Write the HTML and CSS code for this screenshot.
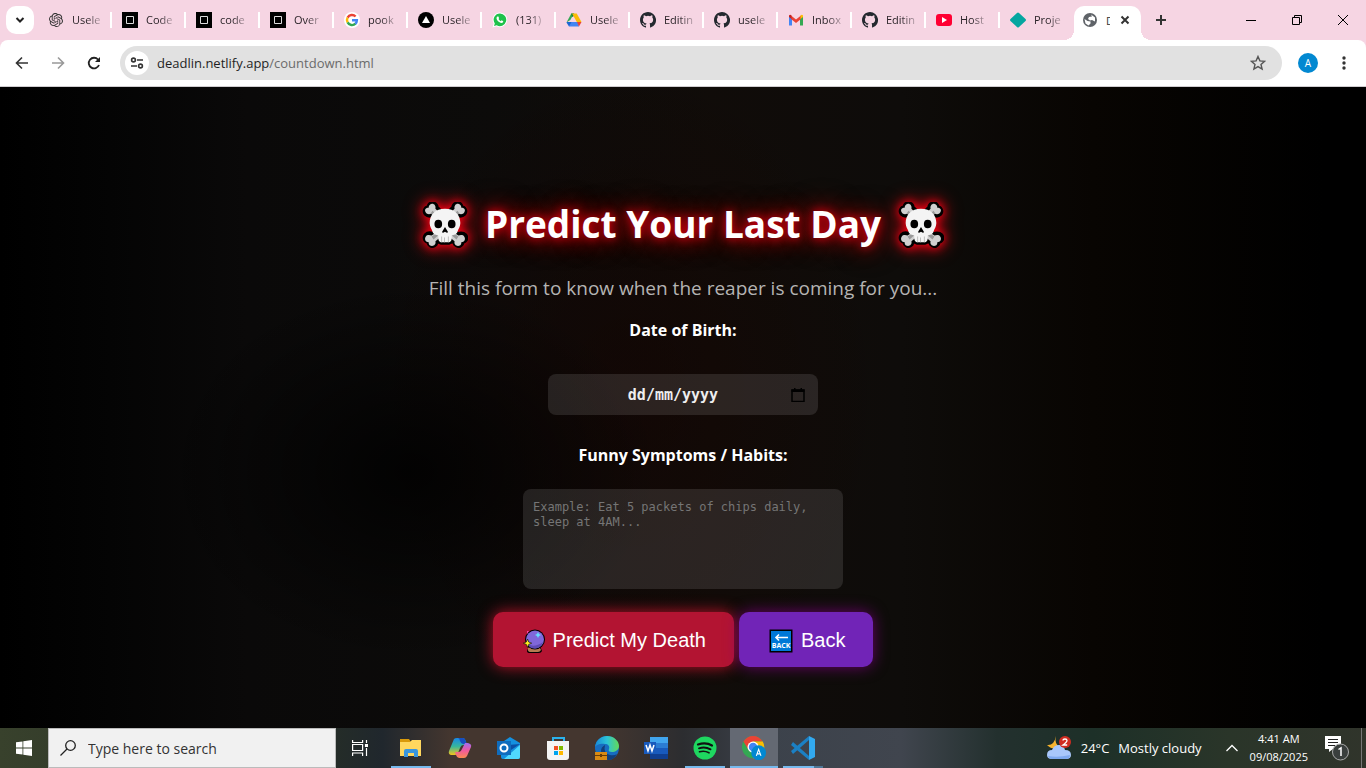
FILE: index.html
```html
<!DOCTYPE html>
<html lang="en">
<head>
<meta charset="utf-8">
<meta name="viewport" content="width=device-width, initial-scale=1">
<title>Predict Your Last Day</title>
<link rel="stylesheet" href="styles.css">
</head>
<body>
<svg class="defs" aria-hidden="true">
  <symbol id="skull" viewBox="0 0 48 48">
    <g stroke="#000" stroke-width="5" stroke-linejoin="round" fill="#000">
      <path d="M8 3c3-3 7 0 7 3l6 6 6 0 6-6c0-3 4-6 7-3 1 1 1 2 1 3 3 0 5 3 3 6-2 2-5 2-7 1l-4 4 0 14 4 3c3-1 6-1 8 1 2 3 0 6-3 6 0 4-4 6-7 3l-2-4-5 2H20l-5-2-1 4c-3 3-7 1-7-3-3 0-5-3-3-6 2-2 5-2 7-1l4-3V17l-4-4c-2 1-5 1-7-1-2-3 0-6 3-6 0-1 0-2 1-3z"/>
    </g>
    <g fill="#d0d0d0">
      <path d="M8 3c3-3 7 0 6 4l6 6-4 5-6-6c-2 1-5 1-6-1-2-3 0-5 3-5 0-1 0-2 1-3z"/>
      <path d="M40 3c-3-3-7 0-6 4l-6 6 4 5 6-6c2 1 5 1 6-1 2-3 0-5-3-5 0-1 0-2-1-3z"/>
      <path d="M8 45c3 2 7 0 6-4l6-5-4-5-6 4c-2-1-5-1-6 1-2 3 0 6 3 6 0 1 0 2 1 3z"/>
      <path d="M40 45c-3 2-7 0-6-4l-6-5 4-5 6 4c2-1 5-1 6 1 2 3 0 6-3 6 0 1 0 2-1 3z"/>
    </g>
    <path fill="#999" d="M11 9l7 7-2 2-7-6zM37 9l-7 7 2 2 7-6zM10 36l6-4 2 2-6 5zM38 36l-6-4-2 2 6 5z"/>
    <path fill="#f4f4f4" d="M24 7c10 0 16 6 16 15 0 4-2 6-3 9-1 3-4 3-6 4v3c0 3-2 4-4 4h-6c-2 0-4-1-4-4v-3c-2-1-5-1-6-4-1-3-3-5-3-9C8 13 14 7 24 7z"/>
    <path fill="#bcbcbc" d="M20 36h1v6h-1zM23 37h1v5h-1zM27 36h1v6h-1z"/>
    <ellipse cx="17" cy="23" rx="4" ry="4.500"/><ellipse cx="31" cy="23" rx="4" ry="4.500"/>
    <path d="M24 26l3 5q0 2-3 0-3 2-3 0z"/>
  </symbol>
  <symbol id="square" viewBox="0 0 16 16"><path d="M0 0h16v16H0z"/><path fill="none" stroke="#ddd" d="M4.500 4.500h7v7h-7z"/></symbol>
  <symbol id="github" viewBox="0 0 16 16"><path fill="#24292f" d="M8 0C3.580 0 0 3.580 0 8c0 3.540 2.290 6.530 5.470 7.590.4.070.55-.17.55-.38v-1.490c-2.010.37-2.530-.49-2.690-.94-.09-.23-.48-.94-.82-1.130-.28-.15-.68-.52-.01-.53.63-.01 1.080.58 1.230.82.72 1.210 1.870.87 2.330.66.07-.52.28-.87.51-1.070-1.780-.2-3.640-.89-3.640-3.950 0-.87.31-1.590.82-2.150-.08-.2-.36-1.020.08-2.120 0 0 .67-.21 2.200.82a7.420 7.420 0 0 1 4 0c1.530-1.040 2.200-.82 2.200-.82.44 1.100.16 1.920.08 2.120.51.56.82 1.270.82 2.150 0 3.070-1.870 3.750-3.650 3.950.29.25.54.73.54 1.480v2.200c0 .21.15.46.55.38A8 8 0 0 0 8 0z"/></symbol>
</svg>

<header class="browser">
  <div class="tabstrip">
    <button class="tab-search" aria-label="Search tabs"><svg width="10" height="10" viewBox="0 0 10 10"><path d="M1.500 3l3.500 3.500L8.500 3" fill="none" stroke="#222" stroke-width="2"/></svg></button>
    <nav class="tabs" aria-label="Tabs">
      <a class="tab" href="#"><svg class="fav fav-knot" viewBox="0 0 24 24"><path fill="#333" d="M22.282 9.821a5.985 5.985 0 0 0-.516-4.910 6.046 6.046 0 0 0-6.510-2.900A6.065 6.065 0 0 0 4.981 4.180a5.985 5.985 0 0 0-3.998 2.900 6.046 6.046 0 0 0 .743 7.097 5.980 5.980 0 0 0 .510 4.911 6.051 6.051 0 0 0 6.515 2.900A5.985 5.985 0 0 0 13.260 24a6.056 6.056 0 0 0 5.772-4.206 5.990 5.990 0 0 0 3.998-2.900 6.056 6.056 0 0 0-.748-7.073zM13.260 22.430a4.476 4.476 0 0 1-2.876-1.040l4.920-2.840a.795.795 0 0 0 .393-.681v-6.737l2.020 1.168v5.620a4.504 4.504 0 0 1-4.457 4.510zM3.600 18.304a4.470 4.470 0 0 1-.535-3.014l4.924 2.843a.771.771 0 0 0 .781 0l5.843-3.369v2.333l-4.872 2.850A4.500 4.500 0 0 1 3.600 18.304zM2.340 7.896a4.485 4.485 0 0 1 2.366-1.973V11.600a.766.766 0 0 0 .388.677l5.815 3.354-2.020 1.169-4.830-2.787A4.504 4.504 0 0 1 2.340 7.896zm16.597 3.856l-5.833-3.388L15.119 7.200l4.830 2.791a4.494 4.494 0 0 1-.676 8.105v-5.678a.790.790 0 0 0-.407-.667zm2.010-3.023l-4.914-2.880a.776.776 0 0 0-.785 0L9.409 9.230V6.897l4.830-2.787a4.500 4.500 0 0 1 6.680 4.660zM8.307 12.863l-2.020-1.164V6.075a4.500 4.500 0 0 1 7.375-3.454L8.704 5.460a.795.795 0 0 0-.393.681zm1.097-2.365l2.602-1.500 2.607 1.500v2.999l-2.597 1.500-2.607-1.500z"/></svg><span>Usele</span></a>
      <a class="tab" href="#"><svg class="fav"><use href="#square"/></svg><span>Code</span></a>
      <a class="tab" href="#"><svg class="fav"><use href="#square"/></svg><span>code</span></a>
      <a class="tab" href="#"><svg class="fav"><use href="#square"/></svg><span>Over</span></a>
      <a class="tab" href="#"><svg class="fav" viewBox="0 0 16 16"><circle cx="8" cy="8" r="8" fill="#fff"/><g fill="none" stroke-width="2.400"><path stroke="#ea4335" d="M3.600 5.600A5 5 0 0 1 11.600 4.500"/><path stroke="#fbbc05" d="M3.600 10.400a5 5 0 0 1 0-4.800"/><path stroke="#34a853" d="M11.500 11.700a5 5 0 0 1-7.900-1.300"/><path stroke="#4285f4" d="M8 8.200h4.900c0 1.500-.5 2.600-1.600 3.600"/></g></svg><span>pook</span></a>
      <a class="tab" href="#"><svg class="fav" viewBox="0 0 16 16"><circle cx="8" cy="8" r="8"/><path fill="#fff" d="M8 4l4 7H4z"/></svg><span>Usele</span></a>
      <a class="tab" href="#"><svg class="fav" viewBox="0 0 16 16"><path fill="#fff" d="M8 .5a7.300 7.300 0 1 1-3.400 13.800L.5 15.500l1.200-4A7.300 7.300 0 0 1 8 .5z"/><path fill="#1fc14b" d="M8 1.500A6.300 6.300 0 1 1 4.700 13.200L2 14l.8-2.600A6.300 6.300 0 0 1 8 1.500z"/><path fill="#fff" d="M5.400 4.500h1l.7 1.700-.6.900q.8 1.500 2.300 2.100l.8-.9 1.700.9q.1 1.600-1.900 1.700C7 10.600 4.600 8.200 4.500 6q.1-1 .9-1.500z"/></svg><span>(131)</span></a>
      <a class="tab" href="#"><svg class="fav" viewBox="0 0 16 16"><path fill="#34a853" d="M5.300 1.500H8L4.300 8 .5 10.500z"/><path fill="#188038" d="M5.300 1.500H8l1 2-3 1.500z"/><path fill="#fbbc04" d="M6 1.500h4.700l4.800 8.500h-4.700z"/><path fill="#4285f4" d="M3.300 10h9L13 14.500H3z"/><path fill="#1967d2" d="M.5 10.500L3 14.500 5.500 10H1z"/><path fill="#ea4335" d="M11 10h4.500L13 14.500z"/></svg><span>Usele</span></a>
      <a class="tab" href="#"><svg class="fav"><use href="#github"/></svg><span>Editin</span></a>
      <a class="tab" href="#"><svg class="fav"><use href="#github"/></svg><span>usele</span></a>
      <a class="tab" href="#"><svg class="fav" viewBox="0 0 16 16"><path fill="#4285f4" d="M1 4l3 2v7.500H1z"/><path fill="#34a853" d="M12 6l3-2v9.500h-3z"/><path fill="#ea4335" d="M3 3.500L8 7.500l5-4V7l-5 4-5-4z"/><path fill="#c5221f" d="M1 3.500Q2 2 3.500 3.500V7L1 5z"/><path fill="#fbbc04" d="M15 3.500Q14 2 12.500 3.500V7L15 5z"/></svg><span>Inbox</span></a>
      <a class="tab" href="#"><svg class="fav"><use href="#github"/></svg><span>Editin</span></a>
      <a class="tab" href="#"><svg class="fav" viewBox="0 0 16 16"><rect y="2" width="16" height="12" rx="3" fill="#ff0033"/><path fill="#fff" d="M6 5l5 3-5 3z"/></svg><span>Host</span></a>
      <a class="tab" href="#"><svg class="fav" viewBox="0 0 16 16"><path fill="#05a6a0" d="M7 1q1-1 2 0l6.500 6q1 1 0 2L9 15q-1 1-2 0L.5 9q-1-1 0-2z"/></svg><span>Proje</span></a>
    </nav>
    <div class="active-tab">
      <svg width="16" height="16" viewBox="0 0 16 16"><circle cx="8" cy="8" r="7" fill="#5f6368"/><path fill="#fff" d="M9 2.500l4 3v4l-3-1.500-2 .5L6 7l1-2 3-.5zM2.500 7l3 2 3 .5v2l-2 2-3-2z"/></svg>
      <span class="active-title">D</span>
      <button class="tab-close" aria-label="Close tab"><svg width="10" height="10" viewBox="0 0 10 10"><path d="M1.500 1.500l7 7m0-7l-7 7" stroke="#333" stroke-width="2"/></svg></button>
    </div>
    <button class="new-tab" aria-label="New tab"><svg width="12" height="12" viewBox="0 0 12 12"><path d="M6 1v10M1 6h10" stroke="#333" stroke-width="2"/></svg></button>
    <div class="window-controls">
      <button aria-label="Minimize"><svg width="10" height="10"><path d="M0 5.500h10" stroke="#000"/></svg></button>
      <button aria-label="Restore"><svg width="10" height="10" fill="none" stroke="#000"><path d="M.5 2.500h7v7h-7zM2.500 2.500v-2h7v7h-2"/></svg></button>
      <button aria-label="Close"><svg width="10" height="10"><path d="M0 0l10 10M10 0L0 10" stroke="#000"/></svg></button>
    </div>
  </div>
  <div class="toolbar">
    <button class="tool" aria-label="Back"><svg width="14" height="14" viewBox="0 0 14 14"><path d="M13 7H2M7 1.500L1.500 7 7 12.500" fill="none" stroke="#333" stroke-width="1.600"/></svg></button>
    <button class="tool" aria-label="Forward"><svg width="14" height="14" viewBox="0 0 14 14"><path d="M1 7h11M7 1.500L12.500 7 7 12.500" fill="none" stroke="#999" stroke-width="1.600"/></svg></button>
    <button class="tool" aria-label="Reload"><svg width="14" height="14" viewBox="0 0 14 14"><path d="M12 9A5.300 5.300 0 1 1 11 3.500L12.300 5" fill="none" stroke="#222" stroke-width="1.800"/><path d="M13 1v5H8z" fill="#222"/></svg></button>
    <div class="address">
      <button class="site-info" aria-label="Site information"><svg width="14" height="12" viewBox="0 0 14 12" fill="none" stroke="#333" stroke-width="1.600"><circle cx="3.500" cy="3" r="1.900"/><path d="M7 3h6M1 9h6"/><circle cx="10.500" cy="9" r="1.900"/></svg></button>
      <a class="url" href="#">deadlin.netlify.app<span>/countdown.html</span></a>
      <button class="star" aria-label="Bookmark"><svg width="16" height="16" viewBox="0 0 16 16"><path d="M8 1.500l1.900 4.400 4.700.4-3.600 3.100 1.100 4.700L8 11.600l-4.100 2.500L5 9.400 1.400 6.300l4.700-.4z" fill="none" stroke="#555" stroke-width="1.400"/></svg></button>
    </div>
    <button class="avatar" aria-label="Profile">A</button>
    <button class="menu" aria-label="Menu"><svg width="4" height="14"><g fill="#333"><circle cx="2" cy="2" r="1.700"/><circle cx="2" cy="7" r="1.700"/><circle cx="2" cy="12" r="1.700"/></g></svg></button>
  </div>
</header>

<main class="page">
  <h1 class="title"><svg class="skull"><use href="#skull"/></svg><span>Predict Your Last Day</span><svg class="skull"><use href="#skull"/></svg></h1>
  <p class="subtitle">Fill this form to know when the reaper is coming for you...</p>
  <form class="form">
    <label class="label" for="dob">Date of Birth:</label>
    <div class="date-box">
      <input id="dob" type="text" placeholder="dd/mm/yyyy">
      <button type="button" class="calendar" aria-label="Show date picker"><svg width="14" height="14" viewBox="0 0 14 14"><path d="M1 2h12v11.500H1z" fill="none" stroke="#000" stroke-width="1.500"/><path d="M.5 1.500h13V4H.5zM3 0h1.500v2H3zM9.500 0H11v2H9.500z"/></svg></button>
    </div>
    <label class="label" for="habits">Funny Symptoms / Habits:</label>
    <textarea id="habits" placeholder="Example: Eat 5 packets of chips daily, sleep at 4AM..."></textarea>
    <div class="actions">
      <button type="button" class="btn btn-predict">
        <svg width="22" height="24" viewBox="0 0 22 24"><path d="M6 17h11l2 5q-1 2-3 2H7q-3 0-3-2z"/><path fill="#b57b51" d="M5 19q6-3 12 0l1 2q-1 2-3 2H8q-3 0-3-2z"/><circle cx="12" cy="10.500" r="10"/><circle cx="12" cy="10.500" r="9" fill="#8067da"/><path fill="#5f4bb5" d="M4 14q6 6 16-1-2 6-8 6.500-6 0-8-5.500z"/><path fill="#f4a" d="M4 2l2 0-2 3z"/><path fill="#6df" d="M15 3l1 2 2 1-2 1-1 2-1-2-2-1 2-1z"/><path fill="#fe2" stroke="#000" stroke-width=".6" d="M4.500 10l1.200 3 3 1.200-3 1.200-1.200 3-1.200-3-3-1.200 3-1.200z"/></svg>
        <span>Predict My Death</span>
      </button>
      <button type="button" class="btn btn-back">
        <svg width="24" height="24" viewBox="0 0 24 24"><path d="M.5.500h23v23H.5z"/><path fill="#0078d7" d="M2 2h20v20H2z"/><path d="M19 8.500H7M10 5.500l-3 3 3 3" fill="none" stroke="#fff" stroke-width="1.600"/><text class="back-glyph" x="12" y="19" text-anchor="middle" fill="#fff">BACK</text></svg>
        <span>Back</span>
      </button>
    </div>
  </form>
</main>

<footer class="taskbar">
  <button class="start" aria-label="Start"><svg width="16" height="16" viewBox="0 0 16 16"><path fill="#fff" d="M0 2.300L6.500 1.400v6.200H0zM7.300 1.300L16 0v7.600H7.300zM0 8.400h6.500v6.200L0 13.700zM7.300 8.400H16V16l-8.700-1.300z"/></svg></button>
  <label class="search"><svg width="16" height="16" viewBox="0 0 16 16" fill="none" stroke="#222" stroke-width="1.300"><circle cx="10.500" cy="5.500" r="4.800"/><path d="M7 9L.5 15.500"/></svg><input type="text" placeholder="Type here to search" aria-label="Type here to search"></label>
  <button class="app" aria-label="Task view"><svg width="16" height="16" fill="none" stroke="#fff" stroke-width="1.200"><path d="M.6 0v2.500h10V0M.6 4.500h10v6H.6zM.6 16v-3h10v3M14.500 0v3M14.500 8v8"/><path fill="#fff" d="M13.500 4.500h2v2h-2z"/></svg></button>
  <div class="apps">
    <button class="app open" aria-label="File Explorer"><svg width="24" height="24" viewBox="0 0 24 24"><path fill="#d99a0b" d="M1 3h9l2 3v3H1z"/><path fill="#ffd75e" d="M1 6h10l2-2h9v16H1z"/><path fill="#3a96dd" d="M5 21v-6q0-2 2-2h10q2 0 2 2v6h-4v-4H9v4z"/></svg></button>
    <button class="app" aria-label="Copilot"><svg width="24" height="24" viewBox="0 0 24 24"><defs><linearGradient id="ca" x2="0" y2="1"><stop stop-color="#1788e8"/><stop offset=".5" stop-color="#38b79b"/><stop offset="1" stop-color="#f5c51b"/></linearGradient><linearGradient id="cb" x2="0" y2="1"><stop stop-color="#a06cf0"/><stop offset=".5" stop-color="#f05a9d"/><stop offset="1" stop-color="#fa8a50"/></linearGradient></defs><path fill="url(#ca)" d="M6 3q1-1 3-1h6q2 0 3 4l1 3h-4q-2 0-3 3l-2 5q-1 2-3 2H3q-3-1-2-4z"/><path fill="#174fc0" d="M10 2h5q2 0 3 4l1 2h-4q-2 0-3-3-.5-3-2-3z"/><path fill="url(#cb)" d="M17 7h3q4 1 3 4l-4 9q-1 2-3 2h-5q-2 0-3-3l-1-3h4q2 0 3-3z"/></svg></button>
    <button class="app" aria-label="Outlook"><svg width="24" height="24" viewBox="0 0 24 24"><path fill="#1490df" d="M4 7l9-6 10 6v14q0 2-2 2H6q-2 0-2-2z"/><path fill="#0a4fa5" d="M10 9l13-1-12 8z"/><path fill="#50d9ff" d="M23 9v12q0 2-2 2H7z"/><path fill="#0f6cbd" d="M0 5h14v14H0z"/><circle cx="7" cy="12" r="3.500" fill="none" stroke="#fff" stroke-width="2"/></svg></button>
    <button class="app" aria-label="Store"><svg width="24" height="24" viewBox="0 0 24 24"><path fill="none" stroke="#2ab2ed" stroke-width="2" d="M7 6V2h11v4"/><path fill="#f4f4f4" d="M1 5h22v16q0 3-3 3H4q-3 0-3-3z"/><path fill="#f25022" d="M8 10h4v4H8z"/><path fill="#7fba00" d="M13 10h4v4h-4z"/><path fill="#00a4ef" d="M8 15h4v4H8z"/><path fill="#ffb900" d="M13 15h4v4h-4z"/></svg></button>
    <button class="app" aria-label="Edge"><svg width="24" height="24" viewBox="0 0 24 24"><defs><linearGradient id="ea"><stop stop-color="#1788d8"/><stop offset=".5" stop-color="#2cc3d6"/><stop offset="1" stop-color="#63d957"/></linearGradient></defs><circle cx="12" cy="12" r="12" fill="#176dc0"/><path fill="url(#ea)" d="M0 11C1 4 6 0 12 0c7 0 12 5 12 10 0 4-4 6-7 6-3 0-4-1-3-3 1-3-1-5-4-5C6 7 1 9 0 11z"/><path fill="#123f7b" d="M10 9q-2 8 5 10 4 1 7-1-3 6-9 6-7-3-7-9 0-4 4-6z"/><path fill="#d98a13" d="M0 16h12v8H0z"/><path fill="#6b3d04" d="M0 19h12v1H0zM5 18h2v3H5z"/></svg></button>
    <button class="app" aria-label="Word"><svg width="24" height="24" viewBox="0 0 24 24"><path fill="#2b7cd3" d="M6 1h18v22H6z"/><path fill="#41a5ee" d="M6 1h18v6H6z"/><path fill="#185abd" d="M6 12h18v6H6z"/><path fill="#103f91" d="M6 18h18v5H6z"/><path fill="#185abd" d="M0 6h12v12H0z"/><path fill="none" stroke="#fff" stroke-width="1.500" d="M2 9l2 6 2-6 2 6 2-6"/></svg></button>
    <button class="app open" aria-label="Spotify"><svg width="24" height="24" viewBox="0 0 24 24"><circle cx="12" cy="12" r="11.500" fill="#1ed760"/><g fill="none" stroke="#111" stroke-linecap="round"><path stroke-width="2.200" d="M5 8.500q8-2.500 14 1"/><path stroke-width="1.900" d="M6 12.300q6-2 11.500 1"/><path stroke-width="1.600" d="M6.500 15.800q5-1.500 9.500 1"/></g></svg></button>
    <button class="app open current" aria-label="Chrome"><svg width="26" height="26" viewBox="0 0 28 28"><circle cx="13" cy="13" r="12" fill="#34a853"/><path fill="#ea4335" d="M2.600 7A12 12 0 0 1 23.400 7H13l-5 9z"/><path fill="#fbbc04" d="M13 7h10.400A12 12 0 0 1 13 25l5-9z"/><circle cx="13" cy="13" r="6" fill="#fff"/><circle cx="13" cy="13" r="4.600" fill="#4285f4"/><circle cx="19" cy="19" r="8" fill="#0288d1"/><path fill="none" stroke="#fff" stroke-width="1.200" d="M16.500 22.500l2.500-7 2.500 7M17.300 20.300h3.400"/></svg></button>
    <button class="app open multi" aria-label="Visual Studio Code"><svg width="24" height="24" viewBox="0 0 24 24"><path fill="#1b80c4" d="M2 6l16 14v4L0 9z"/><path fill="#1b80c4" d="M2 18L18 4V0L0 15z"/><path fill="#32a9ef" d="M18 0l6 3v18l-6 3z"/></svg></button>
  </div>
  <div class="tray">
    <div class="weather">
      <svg width="26" height="24" viewBox="0 0 26 24"><path fill="#f7b32b" d="M10 0q-2 8 4 11-7 4-13-2 7 1 9-9z"/><path fill="#a9c7fa" d="M6 23q-5 0-5-4 0-5 5-5 2-5 7-5 5 0 6 5 6 0 6 5 0 4-5 4z"/><path fill="#7fa9ee" d="M2 20q10 2 22-1 0 4-4 4H6q-3 0-4-3z"/><circle cx="19" cy="6" r="6" fill="#d02c22"/><path fill="none" stroke="#fff" stroke-width="1.300" d="M17 4.500q0-1.500 2-1.500t2 1.500Q21 6 17 9h4.200"/></svg>
      <span>24°C</span><span>Mostly cloudy</span>
    </div>
    <button class="chevron" aria-label="Show hidden icons"><svg width="12" height="8"><path d="M.5 7L6 1.500 11.500 7" fill="none" stroke="#fff" stroke-width="1.300"/></svg></button>
    <div class="clock"><span>4:41 AM</span><span>09/08/2025</span></div>
    <button class="notices" aria-label="Notifications"><svg width="26" height="26" viewBox="0 0 26 26"><path fill="#fff" d="M1 1h16v13H9l-4 3v-3H1z"/><path stroke="#222" d="M4 4.500h10M4 7.500h10M4 10.500h7"/><circle cx="16.500" cy="17" r="8" fill="#3a3f3d" stroke="#aaa"/><path fill="none" stroke="#fff" stroke-width="1.500" d="M14.500 14.500l2.500-1.700V21"/></svg></button>
  </div>
</footer>
</body>
</html>
```
FILE: styles.css
```css
* { box-sizing: border-box; }
body {
  margin: 0;
  min-height: 100vh;
  display: flex;
  flex-direction: column;
  background: #000;
  font-family: "Open Sans", "Noto Sans", sans-serif;
}
button { border: 0; padding: 0; background: none; font: inherit; color: inherit; display: flex; align-items: center; justify-content: center; }
a { color: inherit; text-decoration: none; }
svg { flex: none; display: block; }
.defs { position: absolute; width: 0; height: 0; }

/* Browser frame */
.browser { background: #f6d5e3; }
.tabstrip { display: flex; align-items: center; height: 40px; padding-left: 6px; }
.tab-search { width: 28px; height: 28px; flex: none; border-radius: 10px; background: #fff; margin-right: 4px; }
.tabs { display: flex; flex: 0 1 1036px; min-width: 0; }
.tab {
  flex: 1 1 0;
  min-width: 0;
  display: flex;
  align-items: center;
  gap: 8px;
  height: 16px;
  padding-left: 10px;
  border-right: 2px solid #fff;
  font-size: 11px;
  color: #2b2429;
}
.tab:last-child { border-color: transparent; }
.fav { width: 16px; height: 16px; }
.fav-knot { padding: 1px; }
.tab span { white-space: nowrap; line-height: 20px; -webkit-mask-image: linear-gradient(90deg, #000 50%, rgba(0, 0, 0, .3)); mask-image: linear-gradient(90deg, #000 50%, rgba(0, 0, 0, .3)); }
.active-tab {
  position: relative;
  align-self: flex-end;
  display: flex;
  align-items: center;
  flex: none;
  width: 67px;
  height: 34px;
  padding: 0 8px;
  padding-bottom: 6px;
  background: #fff;
  border-radius: 10px 10px 0 0;
}
.active-tab::before, .active-tab::after { content: ""; position: absolute; bottom: 0; width: 10px; height: 10px; }
.active-tab::before { right: 100%; background: radial-gradient(circle at 0 0, transparent 10px, #fff 10px); }
.active-tab::after { left: 100%; background: radial-gradient(circle at 100% 0, transparent 10px, #fff 10px); }
.active-title { width: 4px; margin-left: 8px; overflow: hidden; font-size: 11px; color: #333; }
.tab-close { width: 16px; height: 16px; margin-left: auto; }
.new-tab { width: 28px; height: 28px; margin-left: 6px; flex: none; }
.window-controls { display: flex; margin-left: auto; }
.window-controls button { width: 46px; height: 40px; }
.toolbar {
  display: flex;
  align-items: center;
  height: 47px;
  padding: 0 12px 0 4px;
  background: #fff;
  border-bottom: 1px solid #d0cdd0;
  border-radius: 8px 8px 0 0;
}
.tool { width: 36px; height: 34px; flex: none; }
.address { flex: 1; min-width: 0; display: flex; align-items: center; height: 34px; margin: 0 16px 0 8px; padding: 0 16px 0 5px; border-radius: 17px; background: #e1e1e1; }
.site-info { width: 24px; height: 24px; border-radius: 50%; background: #fff; }
.url { flex: 1; margin-left: 8px; font-size: 13px; color: #1f1f1f; }
.url span { color: #6b6b6b; }
.avatar { width: 20px; height: 20px; border-radius: 50%; background: #0288d1; color: #fff; font-size: 10px; }
.menu { width: 20px; height: 28px; margin-left: 16px; }

/* Page */
.page {
  flex: 1;
  display: flex;
  flex-direction: column;
  align-items: center;
  justify-content: center;
  padding: 52px 16px 0;
  color: #fff;
  font-family: "Open Sans", "Noto Sans", sans-serif;
  background:
    radial-gradient(ellipse 250px 190px at 30% 60%, rgba(0, 0, 0, .8), transparent),
    radial-gradient(ellipse 260px 340px at 46% 48%, rgba(22, 3, 0, .5), transparent),
    linear-gradient(90deg, #000 0%, #040404 8%, #0a0909 18%, #0c0b0a 36%, #100c09 52%, #0e0c0a 66%, #080502 80%, #000 97%);
}
.title {
  display: flex;
  align-items: center;
  gap: 17px;
  margin: 0;
  font-size: 37px;
  line-height: 48px;
  text-shadow: 0 0 10px #e00010, 0 0 20px #c0000c, 0 0 30px #700;
}
.title span { padding-bottom: 2px; }
.skull { width: 46px; height: 46px; filter: drop-shadow(0 0 5px #f00014) drop-shadow(0 0 8px #c0000c); }
.subtitle { margin: 24px 0 0; font-size: 19px; line-height: 28px; font-weight: 500; color: #b5b4b3; }
.form { display: flex; flex-direction: column; align-items: center; margin-top: 16px; }
.label { font-size: 16px; line-height: 24px; font-weight: 700; }
.date-box { display: flex; align-items: center; width: 270px; height: 41px; margin: 32px 0 28px; padding: 0 12px; border-radius: 8px; background: rgba(255, 255, 255, .11); }
.date-box input { flex: 1; min-width: 0; padding: 0 4px 0 0; border: 0; outline: 0; background: none; text-align: center; font: bold 15px "DejaVu Sans Mono", monospace; color: #eee; }
.date-box input::placeholder { color: #eee; opacity: 1; }
.calendar { width: 16px; height: 16px; }
textarea { width: 320px; height: 100px; margin: 22px 0 23px; padding: 11px 10px; border: 0; border-radius: 8px; outline: 0; resize: none; background: rgba(255, 255, 255, .11); font: 12px/15px "DejaVu Sans Mono", monospace; color: #fff; }
textarea::placeholder { color: #757575; opacity: 1; }
.actions { display: flex; gap: 5px; }
.btn { height: 55px; padding: 2px 28px 0 30px; gap: 8px; border-radius: 10px; font: 20px "Liberation Sans", Arial, sans-serif; white-space: nowrap; }
.btn-predict { background: #b31432; box-shadow: 0 0 15px rgba(230, 20, 50, .8); }
.btn-back { background: #7124b7; box-shadow: 0 0 15px rgba(128, 0, 128, .8); }
.back-glyph { font: bold 7px "Open Sans", sans-serif; }

/* Taskbar */
.taskbar {
  display: flex;
  height: 40px;
  color: #fff;
  background: linear-gradient(90deg, #38412c 0, #252d27 24%, #20272d 28%, #44362f 33%, #44362f 44%, #2c2d30 50%, #3c424b 56%, #40454e 66%, #23302e 73%, #1d3028 80%, #2a3529 90%, #30342b 100%);
}
.start { width: 48px; height: 40px; flex: none; }
.search { display: flex; align-items: center; gap: 12px; flex: 0 1 288px; min-width: 0; padding: 0 11px; background: #f1f1f1; border: 1px solid #bbb; }
.search input { flex: 1; min-width: 0; padding: 0; border: 0; outline: 0; background: none; font: 14px "Open Sans", sans-serif; color: #333; }
.search input::placeholder { color: #333; opacity: 1; }
.apps { display: flex; gap: 1px; margin-left: 3px; }
.app { width: 48px; height: 40px; flex: none; }
.app.open { background: linear-gradient(#76b9ed, #76b9ed) center bottom / 40px 2px no-repeat; }
.app.open.current { background: linear-gradient(#76b9ed, #76b9ed) center bottom / 48px 2px no-repeat, #646973; }
.app.open.multi { background: linear-gradient(90deg, #76b9ed 31px, #4f7898 31px) center bottom / 40px 2px no-repeat; }
.tray { display: flex; align-items: center; margin-left: auto; margin-right: 4px; padding-right: 11px; border-right: 1px solid #777; }
.weather { display: flex; align-items: center; gap: 9px; font-size: 13px; white-space: nowrap; }
.chevron { width: 12px; height: 40px; margin: 0 12px 0 24px; }
.clock { display: flex; flex-direction: column; align-items: center; font-size: 11px; line-height: 18px; margin-right: 16px; }
.notices { width: 26px; height: 26px; }
```
